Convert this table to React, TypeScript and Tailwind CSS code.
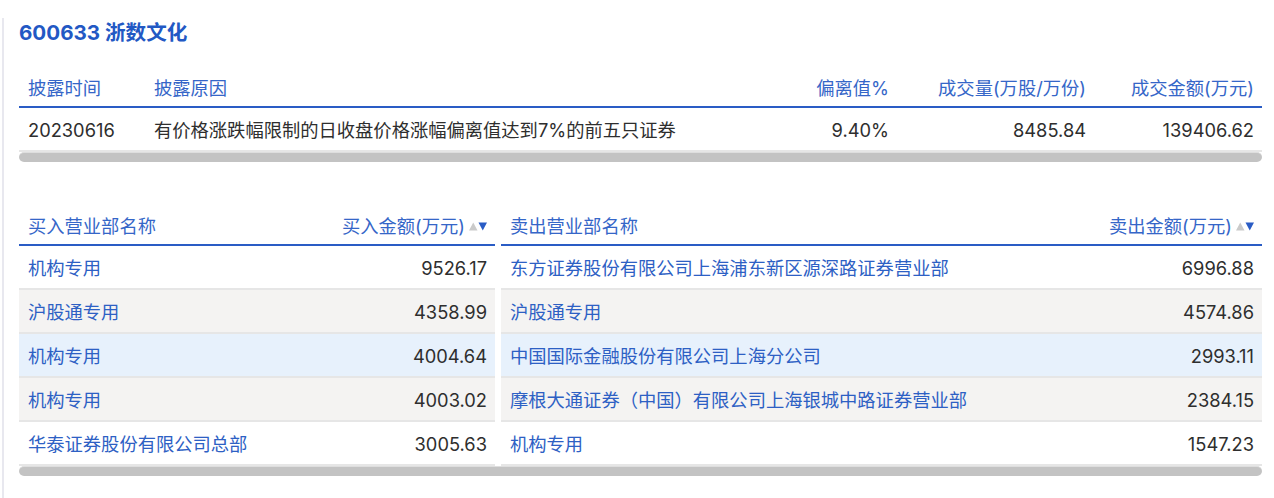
import React from "react";

function SortIcon() {
  return (
    <svg width="18" height="9" viewBox="0 0 18 9" className="ml-[4px] shrink-0">
      <polygon points="0,8.5 4.25,0.5 8.5,8.5" fill="#cacaca" />
      <polygon points="9.5,0.5 18,0.5 13.75,8.5" fill="#2a5cc5" />
    </svg>
  );
}

function ScrollBar() {
  return <div className="h-[10px] rounded-[5px] bg-[#c3c3c3] border-t border-[#dedede]" />;
}

const buy = [
  ["机构专用", "9526.17"],
  ["沪股通专用", "4358.99"],
  ["机构专用", "4004.64"],
  ["机构专用", "4003.02"],
  ["华泰证券股份有限公司总部", "3005.63"],
];

const sell = [
  ["东方证券股份有限公司上海浦东新区源深路证券营业部", "6996.88"],
  ["沪股通专用", "4574.86"],
  ["中国国际金融股份有限公司上海分公司", "2993.11"],
  ["摩根大通证券（中国）有限公司上海银城中路证券营业部", "2384.15"],
  ["机构专用", "1547.23"],
];

const rowBg = ["bg-white", "bg-[#f4f3f2]", "bg-[#e7f1fc]", "bg-[#f4f3f2]", "bg-white"];

function SideTable({ title, amount, rows }: { title: string; amount: string; rows: string[][] }) {
  return (
    <div className="flex-1 min-w-0">
      <div className="h-[38px] box-border flex items-center justify-between pl-[9px] pr-[8px] pt-[1px] border-b-2 border-[#2a5cc5] text-[#3566c8]">
        <span>{title}</span>
        <span className="flex items-center">
          {amount}
          <SortIcon />
        </span>
      </div>
      {rows.map((r, i) => (
        <div
          key={i}
          className={`h-[44px] box-border flex items-center justify-between pl-[9px] pr-[8px] pt-[3px] border-b-2 border-[#e6e6e6] ${rowBg[i]}`}
        >
          <span className="text-[#2d60c4]">{r[0]}</span>
          <span className="text-[#2e2e2e]">{r[1]}</span>
        </div>
      ))}
    </div>
  );
}

export default function App() {
  return (
    <div className="w-[1274px] h-[498px] bg-white pt-[18px] pl-[2px] font-['Inter','Noto_Sans_CJK_SC',sans-serif] text-[18.3px]">
      <div className="h-[480px] border-l-2 border-[#e8e8ef] pl-[15px] pr-[12px]">
        <div className="h-[30px] leading-[30px] text-[20.6px] font-bold text-[#2258c4]">600633 浙数文化</div>

        <div className="mt-[22px]">
          <div className="grid grid-cols-[126px_1fr_197px_197px_168px] h-[38px] box-border pt-[1px] items-center border-b-2 border-[#2a5cc5] text-[#3566c8]">
            <span className="pl-[9px]">披露时间</span>
            <span className="pl-[9px]">披露原因</span>
            <span className="text-right pr-[8px]">偏离值%</span>
            <span className="text-right pr-[8px]">成交量(万股/万份)</span>
            <span className="text-right pr-[8px]">成交金额(万元)</span>
          </div>
          <div className="grid grid-cols-[126px_1fr_197px_197px_168px] h-[44px] box-border pt-[3px] items-center border-b-2 border-[#e6e6e6] text-[#2e2e2e]">
            <span className="pl-[9px]">20230616</span>
            <span className="pl-[9px]">有价格涨跌幅限制的日收盘价格涨幅偏离值达到7%的前五只证券</span>
            <span className="text-right pr-[8px]">9.40%</span>
            <span className="text-right pr-[8px]">8485.84</span>
            <span className="text-right pr-[8px]">139406.62</span>
          </div>
          <ScrollBar />
        </div>

        <div className="mt-[46px]">
          <div className="flex gap-[6px]">
            <div className="w-[476px] shrink-0">
              <SideTable title="买入营业部名称" amount="买入金额(万元)" rows={buy} />
            </div>
            <div className="flex-1 min-w-0">
              <SideTable title="卖出营业部名称" amount="卖出金额(万元)" rows={sell} />
            </div>
          </div>
          <ScrollBar />
        </div>
      </div>
    </div>
  );
}
